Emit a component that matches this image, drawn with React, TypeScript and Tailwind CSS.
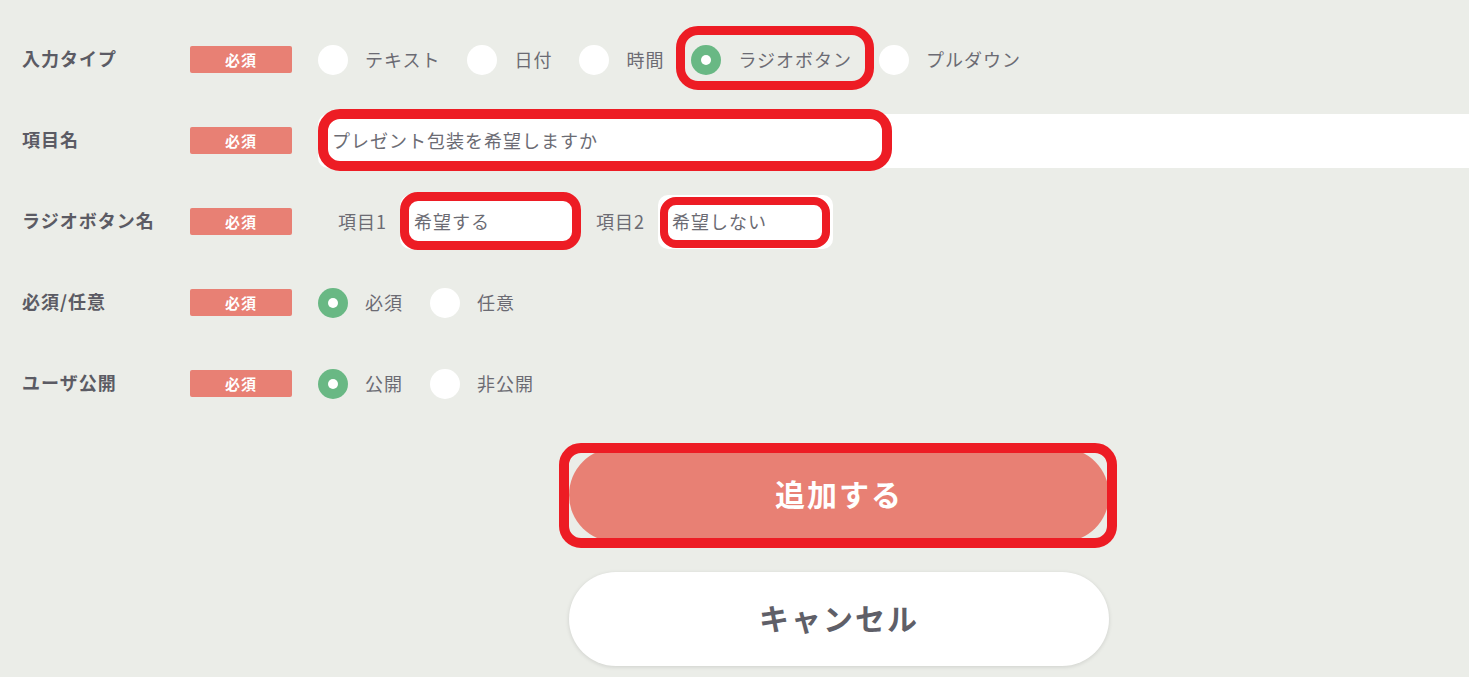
import React from "react";

const FONT = { fontFamily: '"Noto Sans CJK JP", "Noto Sans", sans-serif' };

function Badge() {
  return (
    <div className="w-[102px] h-[27px] rounded-[2px] bg-[#e88074] text-white font-bold text-[15px] tracking-[1px] flex items-center justify-center leading-none">
      必須
    </div>
  );
}

function Radio({ checked }: { checked?: boolean }) {
  return checked ? (
    <div className="w-[30px] h-[30px] rounded-full bg-[#69b884] flex items-center justify-center shrink-0">
      <div className="w-[10px] h-[10px] rounded-full bg-white" />
    </div>
  ) : (
    <div className="w-[30px] h-[30px] rounded-full bg-white shrink-0" />
  );
}

function Option({ label, checked, annotate }: { label: string; checked?: boolean; annotate?: boolean }) {
  return (
    <div className="relative flex items-center gap-[17px] mr-[27px]">
      <Radio checked={checked} />
      <span className="text-[18px] tracking-[1px] text-[#6b6b73] leading-none -mt-[2px]">{label}</span>
      {annotate && (
        <div className="absolute left-[-15px] top-[-19px] w-[198px] h-[64px] border-[9px] border-[#ed1c24] rounded-[22px] pointer-events-none" />
      )}
    </div>
  );
}

function Row({ label, children }: { label: string; children: React.ReactNode }) {
  return (
    <div className="flex items-center h-[81px]">
      <div className="w-[190px] pl-[22px] text-[18px] font-bold tracking-[1px] text-[#5b5b64] leading-none -mt-[3px]">{label}</div>
      <Badge />
      <div className="ml-[26px] flex items-center flex-1">{children}</div>
    </div>
  );
}

const inputText = "text-[18px] tracking-[1px] text-[#6b6b73] leading-none -mt-[2px]";

export default function App() {
  return (
    <div className="min-h-screen w-full bg-[#ebede8] pt-[19px] overflow-hidden" style={FONT}>
      <Row label="入力タイプ">
        <Option label="テキスト" />
        <Option label="日付" />
        <Option label="時間" />
        <Option label="ラジオボタン" checked annotate />
        <Option label="プルダウン" />
      </Row>
      <Row label="項目名">
        <div className="relative flex-1 h-[54px] bg-white rounded-l-[10px] flex items-center pl-[14px]">
          <span className={inputText}>プレゼント包装を希望しますか</span>
          <div className="absolute left-0 top-[-5px] w-[574px] h-[62px] border-[10px] border-[#ed1c24] rounded-[22px] pointer-events-none" />
        </div>
      </Row>
      <Row label="ラジオボタン名">
        <span className="ml-[20px] text-[18px] tracking-[1px] text-[#6b6b73] leading-none -mt-[2px]">項目1</span>
        <div className="relative ml-[13px] w-[175px] h-[54px] bg-white rounded-[10px] flex items-center pl-[14px]">
          <span className={inputText}>希望する</span>
          <div className="absolute left-0 top-[-3px] w-[181px] h-[58px] border-[9px] border-[#ed1c24] rounded-[18px] pointer-events-none" />
        </div>
        <span className="ml-[21px] text-[18px] tracking-[1px] text-[#6b6b73] leading-none -mt-[2px]">項目2</span>
        <div className="relative ml-[13px] w-[175px] h-[54px] bg-white rounded-[10px] flex items-center pl-[14px]">
          <span className={inputText}>希望しない</span>
          <div className="absolute left-[2px] top-[2px] w-[170px] h-[51px] border-[8px] border-[#ed1c24] rounded-[16px] pointer-events-none" />
        </div>
      </Row>
      <Row label="必須/任意">
        <Option label="必須" checked />
        <Option label="任意" />
      </Row>
      <Row label="ユーザ公開">
        <Option label="公開" checked />
        <Option label="非公開" />
      </Row>
      <div className="ml-[569px] mt-[24px] w-[540px] flex flex-col gap-[30px]">
        <div className="relative">
          <button className="w-[540px] h-[94px] rounded-full bg-[#e88074] text-white font-bold text-[30px] tracking-[2px] flex items-center justify-center leading-none">
            <span className="-mt-[4px]">追加する</span>
          </button>
          <div className="absolute left-[-10px] top-[-5px] w-[558px] h-[105px] border-[10px] border-[#ed1c24] rounded-[22px] pointer-events-none" />
        </div>
        <button className="w-[540px] h-[94px] rounded-full bg-white text-[#5f5f68] font-bold text-[30px] tracking-[2px] flex items-center justify-center leading-none shadow-[0_1px_4px_rgba(0,0,0,0.12)]">
          <span className="-mt-[4px]">キャンセル</span>
        </button>
      </div>
    </div>
  );
}
